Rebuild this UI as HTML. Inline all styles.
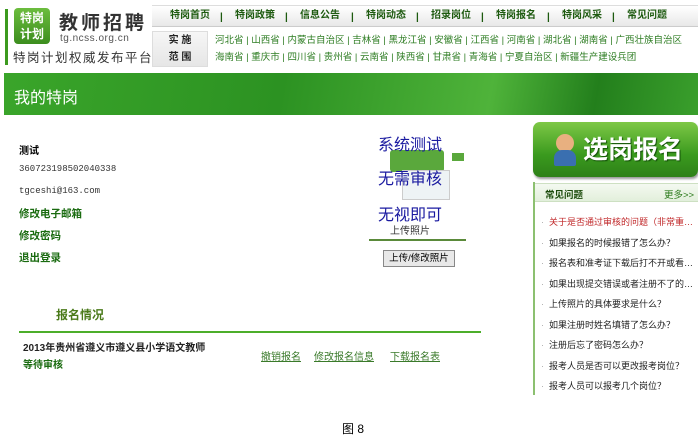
<!DOCTYPE html>
<html><head><meta charset="utf-8"><style>
*{margin:0;padding:0;box-sizing:border-box}
body{width:698px;height:445px;background:#fff;font-family:"Liberation Sans","Noto Sans CJK SC",sans-serif;position:relative;overflow:hidden;font-size:12px}
.a{position:absolute;white-space:nowrap}
.nav{left:152px;top:5px;width:546px;height:22px;background:linear-gradient(#fff,#e8e8e8);border-top:1px solid #ddd;border-bottom:1px solid #ccc}
.n{position:absolute;top:9px;line-height:14px;font-size:10px;font-weight:bold;color:#1d5a0f;white-space:nowrap}
.p{top:11px}
.prov{font-size:9.5px;color:#2e7d23;line-height:17px}
.faq div{font-size:9px;color:#222;height:20.5px;line-height:20.5px;padding-left:4px;overflow:hidden}
.faq div:before{content:"·";color:#aaa;margin-right:5px}
</style></head><body>
<div class="a" style="left:5px;top:9px;width:3px;height:56px;background:#3c9a1e"></div>
<div class="a" style="left:14px;top:8px;width:36px;height:36px;background:linear-gradient(#6cbd3e,#3c8d1e);border-radius:4px;color:#fff;font-size:12px;font-weight:bold;line-height:16px;text-align:center;padding-top:2px">特岗<br>计划</div>
<div class="a" style="left:59px;top:8px;font-size:19px;font-weight:bold;color:#333;letter-spacing:3px">教师招聘</div>
<div class="a" style="left:60px;top:33px;font-size:10px;color:#555;letter-spacing:0.5px">tg.ncss.org.cn</div>
<div class="a" style="left:13px;top:47px;font-size:12.5px;color:#333;letter-spacing:1.5px">特岗计划权威发布平台</div>
<div class="a nav"></div>
<span class="n" style="left:170px">特岗首页</span><span class="n p" style="left:220px">|</span>
<span class="n" style="left:235px">特岗政策</span><span class="n p" style="left:285px">|</span>
<span class="n" style="left:300px">信息公告</span><span class="n p" style="left:351px">|</span>
<span class="n" style="left:366px">特岗动态</span><span class="n p" style="left:416px">|</span>
<span class="n" style="left:431px">招录岗位</span><span class="n p" style="left:481px">|</span>
<span class="n" style="left:496px">特岗报名</span><span class="n p" style="left:547px">|</span>
<span class="n" style="left:562px">特岗风采</span><span class="n p" style="left:612px">|</span>
<span class="n" style="left:627px">常见问题</span>
<div class="a" style="left:152px;top:31px;width:56px;height:36px;background:linear-gradient(#f6f6f6,#e6e6e6);border:1px solid #ddd;font-size:10px;font-weight:bold;text-align:center;line-height:17px;color:#222">实 施<br>范 围</div>
<div class="a prov" style="left:215px;top:32px">河北省 | 山西省 | 内蒙古自治区 | 吉林省 | 黑龙江省 | 安徽省 | 江西省 | 河南省 | 湖北省 | 湖南省 | 广西壮族自治区</div>
<div class="a prov" style="left:215px;top:49px">海南省 | 重庆市 | 四川省 | 贵州省 | 云南省 | 陕西省 | 甘肃省 | 青海省 | 宁夏自治区 | 新疆生产建设兵团</div>
<div class="a" style="left:4px;top:73px;width:694px;height:42px;background:linear-gradient(100deg,#3aa52a 0%,#2c9222 40%,#4fb33a 70%,#237f1c 85%,#3a9f2c 100%)"></div>
<div class="a" style="left:14px;top:84px;font-size:16px;color:#fff">我的特岗</div>
<div class="a" style="left:19px;top:142px;font-size:10px;font-weight:bold">测试</div>
<div class="a" style="left:19px;top:164px;font-size:9px;font-family:'Liberation Mono',monospace;color:#333">360723198502040338</div>
<div class="a" style="left:19px;top:186px;font-size:9px;font-family:'Liberation Mono',monospace;color:#333">tgceshi@163.com</div>
<div class="a" style="left:19px;top:206px;font-size:10.5px;font-weight:bold;color:#1a6b10">修改电子邮箱</div>
<div class="a" style="left:19px;top:228px;font-size:10.5px;font-weight:bold;color:#1a6b10">修改密码</div>
<div class="a" style="left:19px;top:250px;font-size:10.5px;font-weight:bold;color:#1a6b10">退出登录</div>
<div class="a" style="left:390px;top:150px;width:54px;height:22px;background:#5aa83c;border-radius:3px"></div>
<div class="a" style="left:402px;top:170px;width:48px;height:30px;background:#eef3f5;border:1px solid #ccc"></div>
<div class="a" style="left:452px;top:153px;width:12px;height:8px;background:#5aa83c"></div>
<div class="a" style="left:378px;top:131px;font-size:16px;color:#1a1aa0">系统测试</div>
<div class="a" style="left:378px;top:165px;font-size:16px;color:#1a1aa0">无需审核</div>
<div class="a" style="left:378px;top:201px;font-size:16px;color:#1a1aa0">无视即可</div>
<div class="a" style="left:390px;top:222px;font-size:10px;color:#333">上传照片</div>
<div class="a" style="left:369px;top:239px;width:97px;height:2px;background:#5a8a3a"></div>
<div class="a" style="left:383px;top:250px;width:72px;height:17px;background:#e8e8e8;border:1px solid #888;font-size:9.5px;text-align:center;line-height:15px">上传/修改照片</div>
<div class="a" style="left:56px;top:306px;font-size:12px;font-weight:bold;color:#4a7a1a">报名情况</div>
<div class="a" style="left:19px;top:331px;width:462px;height:2px;background:#4cae2a"></div>
<div class="a" style="left:23px;top:339px;font-size:10px;font-weight:bold;color:#222">2013年贵州省遵义市遵义县小学语文教师</div>
<div class="a" style="left:23px;top:356px;font-size:10px;font-weight:bold;color:#1a6b10">等待审核</div>
<div class="a" style="left:261px;top:348px;font-size:10px;color:#3a7a2a;text-decoration:underline">撤销报名</div>
<div class="a" style="left:314px;top:348px;font-size:10px;color:#3a7a2a;text-decoration:underline">修改报名信息</div>
<div class="a" style="left:390px;top:348px;font-size:10px;color:#3a7a2a;text-decoration:underline">下载报名表</div>
<div class="a" style="left:342px;top:420px;font-size:12px;color:#000">图 8</div>
<div class="a" style="left:533px;top:122px;width:165px;height:55px;background:linear-gradient(#7ec846,#3a9a1e 60%,#2e8018);border-radius:7px;box-shadow:1px 2px 2px #999"></div>
<div class="a" style="left:556px;top:134px;width:18px;height:18px;border-radius:50%;background:#e8b080"></div>
<div class="a" style="left:554px;top:150px;width:22px;height:16px;border-radius:8px 8px 2px 2px;background:#3a6fb0"></div>
<div class="a" style="left:583px;top:130px;font-size:25px;font-weight:bold;color:#fff;text-shadow:1px 1px 1px #135008">选岗报名</div>
<div class="a" style="left:533px;top:182px;width:165px;height:213px;border-left:2px solid #8cc070"></div>
<div class="a" style="left:535px;top:183px;width:163px;height:19px;background:linear-gradient(#f4f9f1,#e2efdb);border-top:1px solid #cde0c2;border-bottom:1px solid #cde0c2"></div>
<div class="a" style="left:545px;top:187px;font-size:9.5px;font-weight:bold;color:#1a4a0a">常见问题</div>
<div class="a" style="left:664px;top:187px;font-size:9.5px;color:#2a7a1a">更多&gt;&gt;</div>
<div class="a faq" style="left:537px;top:212px;width:160px">
<div style="color:#c0282a">关于是否通过审核的问题（非常重…</div>
<div>如果报名的时候报错了怎么办？</div>
<div>报名表和准考证下载后打不开或看…</div>
<div>如果出现提交错误或者注册不了的…</div>
<div>上传照片的具体要求是什么？</div>
<div>如果注册时姓名填错了怎么办？</div>
<div>注册后忘了密码怎么办？</div>
<div>报考人员是否可以更改报考岗位？</div>
<div>报考人员可以报考几个岗位？</div>
</div>
</body></html>
